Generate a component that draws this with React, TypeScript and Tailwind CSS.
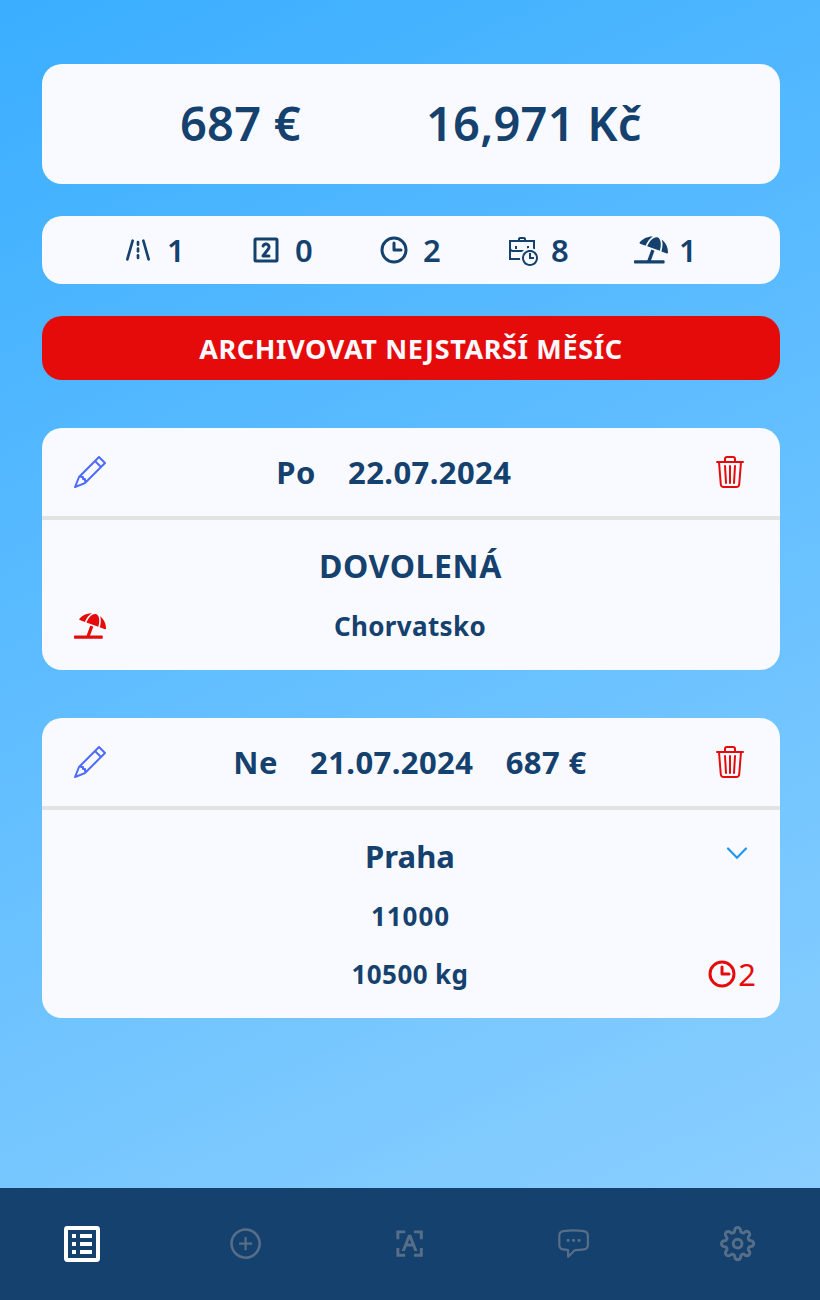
import type { ReactNode } from 'react';
import { TbRoad } from 'react-icons/tb';
import { PiNumberSquareTwoBold, PiClockBold } from 'react-icons/pi';
import { LiaBusinessTimeSolid } from 'react-icons/lia';
import { FaUmbrellaBeach } from 'react-icons/fa';
import { BsPencil, BsTrash3 } from 'react-icons/bs';
import { AiOutlinePlusCircle } from 'react-icons/ai';
import { RiCharacterRecognitionLine } from 'react-icons/ri';
import { HiOutlineChatBubbleLeftEllipsis } from 'react-icons/hi2';
import { FiSettings } from 'react-icons/fi';

function Stat({ icon, value }: { icon: ReactNode; value: number }) {
  return (
    <div className="flex w-32 items-center">
      <span className="flex w-[45px] shrink-0 items-center">{icon}</span>
      <span className="text-[31px] font-semibold leading-none">{value}</span>
    </div>
  );
}

function ChevronDown() {
  return (
    <svg viewBox="0 0 32 32" className="-mt-[6px] mr-[2px] size-8 justify-self-end" fill="none" stroke="#2196f3" strokeWidth="2.2" strokeLinecap="round">
      <path d="M8 11.5 17 20.7 26 11.5" />
    </svg>
  );
}

function ListIcon() {
  return (
    <svg viewBox="0 0 24 24" className="size-12" fill="currentColor">
      <path fillRule="evenodd" d="M4.7 3h14.6A1.7 1.7 0 0 1 21 4.7v14.6a1.7 1.7 0 0 1-1.7 1.7H4.7A1.7 1.7 0 0 1 3 19.3V4.7A1.7 1.7 0 0 1 4.7 3ZM5 5v14h14V5Z" />
      <path d="M7 7h2v2H7zM11 7h6v2h-6zM7 11h2v2H7zM11 11h6v2h-6zM7 15h2v2H7zM11 15h6v2h-6z" />
    </svg>
  );
}

function RecordHeader({ day, date, price }: { day: string; date: string; price?: string }) {
  return (
    <header className="flex h-[92px] items-center justify-between border-b-4 border-[#e3e3e3] px-8">
      <BsPencil size={32} className="text-[#4d6bff]" />
      <div className="flex gap-[32.3px] text-[31px] font-bold leading-none tracking-[0.4px]">
        <span>{day}</span>
        <span>{date}</span>
        <span>{price}</span>
      </div>
      <BsTrash3 size={32} className="mr-[2px] text-[#e60b0b]" />
    </header>
  );
}

export default function App() {
  return (
    <div className="flex h-[1300px] w-[820px] flex-col bg-[linear-gradient(155deg,#3aaeff,#90d1ff)] font-['Noto_Sans',sans-serif] text-[#15416e]">
      <main className="flex grow flex-col pl-[42px] pr-10 pt-16">
        <section className="flex h-[120px] items-center rounded-[20px] bg-[#f9faff] pb-[2px] pl-[138px] text-[47px] font-semibold leading-none tracking-[0.2px]">
          <span className="w-[246px]">687 €</span>
          <span>16,971 Kč</span>
        </section>

        <section className="mt-8 flex h-[68px] items-center rounded-[20px] bg-[#f9faff] pl-20">
          <Stat icon={<TbRoad size={32} />} value={1} />
          <Stat icon={<PiNumberSquareTwoBold size={32} />} value={0} />
          <Stat icon={<PiClockBold size={32} />} value={2} />
          <Stat icon={<LiaBusinessTimeSolid size={32} />} value={8} />
          <Stat icon={<FaUmbrellaBeach size={34} className="mr-[13px] shrink-0" />} value={1} />
        </section>

        <button className="mt-8 h-16 rounded-[20px] bg-[#e60b0b] text-[27px] font-bold leading-none tracking-[0.62px] text-[#f9faff]">
          ARCHIVOVAT NEJSTARŠÍ MĚSÍC
        </button>

        <article className="mt-12 h-[242px] rounded-[20px] bg-[#f9faff]">
          <RecordHeader day="Po" date="22.07.2024" />
          <div className="px-8 pt-[29px] text-center font-bold">
            <h2 className="pr-[1px] text-[32px] leading-[34px] tracking-[0.6px]">DOVOLENÁ</h2>
            <div className="mt-[25px] grid grid-cols-[32px_1fr_34px] items-center">
              <FaUmbrellaBeach size={32} className="text-[#e60b0b]" />
              <span className="text-[26px] leading-9 tracking-[0.35px]">Chorvatsko</span>
            </div>
          </div>
        </article>

        <article className="mt-12 h-[300px] rounded-[20px] bg-[#f9faff]">
          <RecordHeader day="Ne" date="21.07.2024" price="687 €" />
          <div className="px-[26px] pt-[29px] text-center font-bold">
            <div className="grid grid-cols-[46px_1fr_48px] items-center">
              <h2 className="col-start-2 text-[31px] leading-[34px]">Praha</h2>
              <ChevronDown />
            </div>
            <p className="mt-[25px] pr-[1px] text-[26px] leading-9 tracking-[0.9px]">11000</p>
            <div className="mt-[22px] grid grid-cols-[46px_1fr_48px] items-center">
              <span className="col-start-2 text-[26px] leading-9 tracking-[0.4px]">10500 kg</span>
              <span className="-mr-[2px] flex items-center justify-end text-[31px] font-normal leading-none text-[#e60b0b]">
                <PiClockBold size={32} className="shrink-0" />2
              </span>
            </div>
          </div>
        </article>
      </main>

      <nav className="grid h-28 grid-cols-5 place-items-center bg-[#15416e] text-[#566e88]">
        <span className="text-white"><ListIcon /></span>
        <AiOutlinePlusCircle size={35.2} />
        <RiCharacterRecognitionLine size={35.2} />
        <HiOutlineChatBubbleLeftEllipsis size={35.2} />
        <FiSettings size={35.2} />
      </nav>
    </div>
  );
}
